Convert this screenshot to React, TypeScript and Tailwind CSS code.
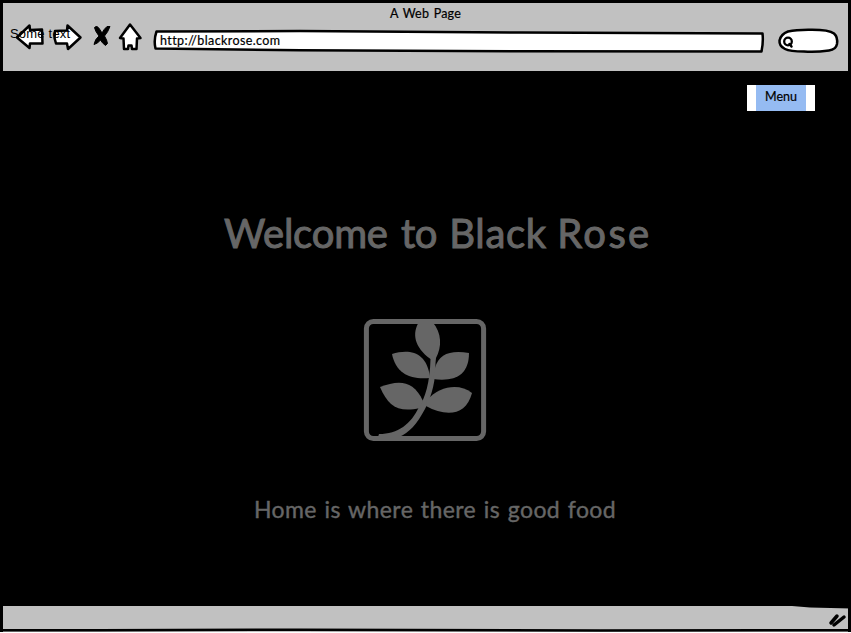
const ink = { stroke: "#000", strokeWidth: 2.5, strokeLinejoin: "round" as const, strokeLinecap: "round" as const };

function NavigationIcons() {
  return (
    <svg width="150" height="40" viewBox="0 20 150 40" className="shrink-0" aria-hidden="true">
      <g fill="#fff" {...ink}>
        <path d="M17 37.5 29.5 25.5 30 30 42 29.5 42.5 43.5 30 43.5 29.5 48Z" />
        <path d="M55 31 67 30.5 67.5 25.5 80.5 37.5 68 49 67 43.5 56 43.5 54.5 38Z" />
        <path d="M130 24.5 140.5 38 137 38.5 136.5 49 132 49 131.5 45.5 128.5 45.5 128 49 124 49 123.5 38.5 120 38Z" />
      </g>
      <path d="M94.5 27.5Q97 25 99.5 29L102 33Q104 29 107 26.5L110 26.5Q108 32 104.5 36Q107 40 107.5 43.5L105.5 45.5Q102 43 100.5 40Q98 43.5 94 44.5Q95 39 99 36Q95 31 94.5 27.5Z" stroke="#000" strokeWidth="1" />
    </svg>
  );
}

function AddressBar() {
  return (
    <div className="relative h-[26px] w-[614px] shrink-0">
      <svg width="614" height="26" viewBox="152 28 614 26" className="absolute inset-0" aria-hidden="true">
        <path d="M156.5 31.5 300 31 520 32.5 762.5 33.5Q763.5 42 761.5 51.5L520 51.2 300 50.2 155.5 48.5Q153.5 40 156.5 31.5Z" fill="#fff" {...ink} />
      </svg>
      <span className="relative ml-[8px] block whitespace-nowrap pt-[4px] text-[12.5px] leading-[17px] tracking-[0.4px] [-webkit-text-stroke:0.2px_black]">http://blackrose.com</span>
    </div>
  );
}

function SearchBox() {
  return (
    <svg width="64" height="30" viewBox="776 27 64 30" className="ml-[10px] shrink-0" aria-hidden="true">
      <path d="M788 31.5Q797 29.5 812 29.8Q829 29.8 834 33.5Q838 37 837 44Q836 49.5 829 50.5Q815 52.5 804 51.5Q790 51.5 785 49Q779 46 779.5 40.5Q781 34 788 31.5Z" fill="#fff" {...ink} />
      <circle cx="788" cy="41.5" r="3.8" fill="#fff" stroke="#000" strokeWidth="2.3" />
      <path d="M789.5 44 791.5 46.5" fill="none" {...ink} />
    </svg>
  );
}

function Sprig() {
  return (
    <svg width="124" height="124" viewBox="363 318 124 124" fill="#666" className="ml-[363px] mt-[62px] block" aria-hidden="true">
      <rect x="366.4" y="321.4" width="117.2" height="117.2" rx="7" fill="none" stroke="#666" strokeWidth="5" />
      <path d="M419 322H432.5C442 333 442 347 436 358L435.5 363C436 379 432 396 425 409C417 424 409 433 399 437L378 437 379 434C398 434 411 424 419 407C425 399 430 382 430.5 359C414 347 412 333 419 322Z" />
      <path d="M392 354C409 349 427 351 430 378C411 380 396 374 392 354Z" />
      <path d="M469 353C450 350 439 354 435 368L433 379C455 382 469 375 469 353Z" />
      <path d="M380 387C399 380 413 380 423 401L420 408C398 413 388 406 380 387Z" />
      <path d="M472 393C459 383 440 386 427 400L426 406C446 417 466 416 472 393Z" />
    </svg>
  );
}

export default function App() {
  return (
    <div className="flex h-[633px] w-[851px] flex-col overflow-hidden bg-white font-['Lato','Noto_Sans',sans-serif] text-black">
      <header className="relative h-[71px] shrink-0 border-x-[3px] border-t-[3px] border-black bg-[#c1c1c1]">
        <h1 className="pt-[2px] text-center text-[12.5px] leading-[17px] tracking-[0.2px] [word-spacing:1.2px] [-webkit-text-stroke:0.2px_black]">A Web Page</h1>
        <div className="-ml-[3px] -mt-[2px] flex w-[851px]">
          <NavigationIcons />
          <div className="ml-[2px] mt-[8px]"><AddressBar /></div>
          <div className="mt-[7px]"><SearchBox /></div>
        </div>
        <span className="absolute left-[7px] top-[23px] whitespace-nowrap font-['Liberation_Sans',sans-serif] text-[13px] leading-[15px] tracking-[0.2px]">Some text</span>
      </header>
      <main className="h-[535px] shrink-0 bg-black text-[#666]">
        <div className="flex h-[40px] justify-end pr-[36px] pt-[14px]">
          <button className="h-[26px] w-[68px] border-x-[9px] border-white bg-[#95bbf2] pb-[2px] text-[12.5px] leading-[24px] text-black [-webkit-text-stroke:0.2px_black]">Menu</button>
        </div>
        <h2 className="ml-[224px] mt-[98px] h-[47px] whitespace-nowrap text-[40px] leading-[48px] [-webkit-text-stroke:1px_#666]">
          <span className="tracking-[-0.2px]">Welcome</span>{" "}
          <span className="ml-[3px] tracking-[-0.5px]">to</span>{" "}
          <span className="ml-[2px] tracking-[0.7px]">Black</span>{" "}
          <span className="tracking-[2.4px]">Rose</span>
        </h2>
        <Sprig />
        <p className="ml-[254px] mt-[53px] whitespace-nowrap text-[23px] leading-[28px] tracking-[0.4px] [word-spacing:1.4px] [-webkit-text-stroke:0.4px_#666]">Home is where there is good food</p>
      </main>
      <footer className="relative h-[27px] shrink-0 border-x-[3px] border-black bg-[#c1c1c1]">
        <svg width="851" height="27" viewBox="0 606 851 27" className="absolute -left-[3px] top-0" aria-hidden="true">
          <path d="M780 605H851V608.5L810 607.5Z" />
          <path d="M0 632H851V633H0Z" fill="#fff" />
          <path d="M3 630.3 100 630.3 300 629.7 600 630.5 848 630.2" fill="none" {...ink} />
          <path d="M831 623 837 616M834 625 844 617" fill="none" {...ink} strokeWidth={3.5} />
        </svg>
      </footer>
    </div>
  );
}
